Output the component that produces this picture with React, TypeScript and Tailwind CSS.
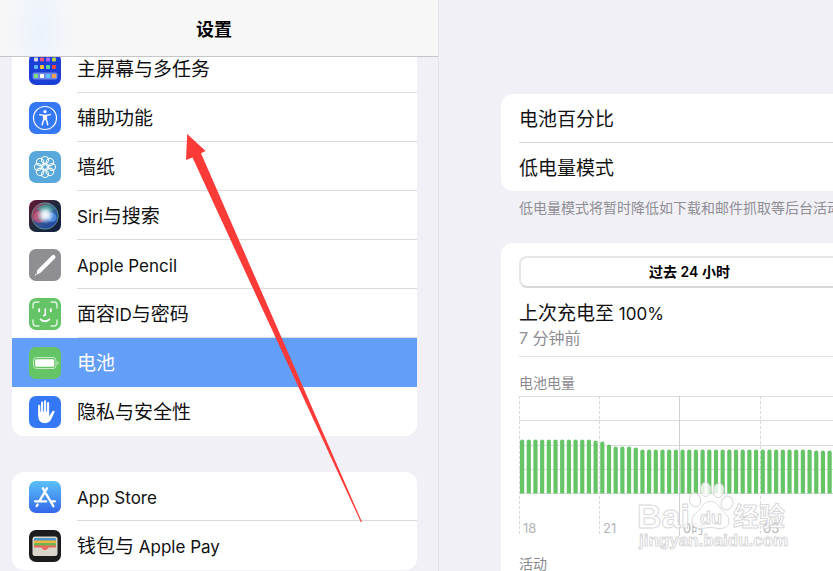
import React from "react";

type Item = {
    label: string;
    icon: React.ReactNode;
    active?: boolean;
};

const HomeScreenIcon: React.FC = () => (
    <svg viewBox="0 0 32 32" className="size-8" aria-hidden="true">
        <rect width="32" height="32" rx="7" fill="#1b3fd6" />
        <rect x="3.5" y="19.5" width="25" height="7" rx="2" fill="#6f86e6" />
        {[
            ["#d9d9de", "#f2557a", "#b06af5", "#b5d64a"],
            ["#5ab4f5", "#f7c33c", "#5ed6a0", "#f04a3c"],
            ["#7ee07c", "#ffffff", "#5ac8fa", "#f5a04a"],
        ].map((row, r) =>
            row.map((fill, c) => (
                <rect key={`${r}-${c}`} x={5 + c * 6} y={[4.5, 12, 21][r]} width="4" height="4" rx="1" fill={fill} />
            ))
        )}
    </svg>
);

const AccessibilityIcon: React.FC = () => (
    <svg viewBox="0 0 32 32" className="size-8" aria-hidden="true">
        <rect width="32" height="32" rx="7" fill="#3478f6" />
        <circle cx="16" cy="16" r="11.5" fill="none" stroke="#fff" strokeWidth="1.2" />
        <circle cx="16" cy="9.6" r="1.6" fill="#fff" />
        <path d="M10.6 12.6 L14.6 13.4 V17.5 L13.2 22.8 M21.4 12.6 L17.4 13.4 V17.5 L18.8 22.8" fill="none" stroke="#fff" strokeWidth="1.4" strokeLinecap="round" strokeLinejoin="round" />
        <path d="M14.2 12.8 H17.8 V18.2 H14.2 Z" fill="#fff" />
    </svg>
);

const WallpaperIcon: React.FC = () => (
    <svg viewBox="0 0 32 32" className="size-8" aria-hidden="true">
        <rect width="32" height="32" rx="7" fill="#58a8dc" />
        <g fill="none" stroke="#fff" strokeWidth="1">
            {[0, 45, 90, 135, 180, 225, 270, 315].map((angle) => (
                <g key={angle} transform={`rotate(${angle} 16 16)`}>
                    <circle cx="16" cy="9" r="3.6" />
                    <path d="M16 13.8 V12.4" />
                </g>
            ))}
            <circle cx="16" cy="16" r="2.4" />
        </g>
    </svg>
);

const SiriIcon: React.FC = () => (
    <svg viewBox="0 0 32 32" className="size-8" aria-hidden="true">
        <defs>
            <linearGradient id="siri-bg" x1="0" y1="0" x2="1" y2="1">
                <stop offset="0" stopColor="#6a1633" />
                <stop offset="0.5" stopColor="#1d2a3c" />
                <stop offset="1" stopColor="#101c3e" />
            </linearGradient>
            <linearGradient id="siri-orb" x1="0" y1="0.3" x2="1" y2="0.7">
                <stop offset="0" stopColor="#d0346a" />
                <stop offset="0.45" stopColor="#5c8fa3" />
                <stop offset="1" stopColor="#1c62cf" />
            </linearGradient>
            <radialGradient id="siri-glow">
                <stop offset="0" stopColor="#fff" />
                <stop offset="0.4" stopColor="#e8f6ff" stopOpacity="0.85" />
                <stop offset="1" stopColor="#bfe6ff" stopOpacity="0" />
            </radialGradient>
        </defs>
        <rect width="32" height="32" rx="7" fill="url(#siri-bg)" />
        <circle cx="16" cy="16" r="13" fill="url(#siri-orb)" opacity="0.75" />
        <path d="M4 21 Q16 15 28 21 A13 13 0 0 1 4 21" fill="#2340a0" opacity="0.6" />
        <circle cx="10.5" cy="17" r="6" fill="#e0607f" opacity="0.6" />
        <circle cx="23" cy="17.5" r="4.6" fill="#5b9bf5" opacity="0.7" />
        <path d="M7 9 Q16 1 25 9 Q18 11 16 16 Q12 10 7 9" fill="#3bb591" opacity="0.5" />
        <circle cx="16.5" cy="15" r="9" fill="url(#siri-glow)" />
        <circle cx="16" cy="16" r="13.3" fill="none" stroke="#7cb8a4" strokeWidth="0.8" opacity="0.8" />
    </svg>
);

const PencilIcon: React.FC = () => (
    <svg viewBox="0 0 32 32" className="size-8" aria-hidden="true">
        <rect width="32" height="32" rx="7" fill="#8e8e93" />
        <path d="M24.4 8.1 L10.6 21.8" stroke="#fff" strokeWidth="4.2" strokeLinecap="round" />
        <path d="M8.4 20.8 L11.6 24 L7.6 25.6 Z" fill="#fff" />
        <path d="M6.9 25.1 L7.4 25.6 L6.2 26.2 Z" fill="#fff" stroke="#fff" strokeWidth="0.6" />
    </svg>
);

const FaceIdIcon: React.FC = () => (
    <svg viewBox="0 0 32 32" className="size-8" aria-hidden="true">
        <rect width="32" height="32" rx="7" fill="#65c466" />
        <g fill="none" stroke="#fff" strokeLinecap="round">
            <path d="M4 10 V7 Q4 4 7 4 H10 M22 4 H25 Q28 4 28 7 V10 M28 22 V25 Q28 28 25 28 H22 M10 28 H7 Q4 28 4 25 V22" strokeWidth="1.4" opacity="0.8" />
            <path d="M10.2 11.2 V13.2 M21.8 11.2 V13.2" strokeWidth="1.9" />
            <path d="M16.3 11 V16.4 Q16.3 17.6 14.7 17.6" strokeWidth="1.6" />
            <path d="M11.6 21.3 Q16 25.3 20.4 21.3" strokeWidth="1.8" />
        </g>
    </svg>
);

const BatteryIcon: React.FC = () => (
    <svg viewBox="0 0 32 32" className="size-8" aria-hidden="true">
        <rect width="32" height="32" rx="7" fill="#65c466" />
        <rect x="4.5" y="10.5" width="22.5" height="11" rx="3" fill="none" stroke="#c9ecc9" strokeWidth="1" />
        <rect x="6.2" y="12.2" width="19" height="7.6" rx="1.3" fill="#fff" />
        <path d="M28.3 14.3 Q29.6 15 29.6 16 Q29.6 17 28.3 17.7 Z" fill="#c9ecc9" />
    </svg>
);

const PrivacyIcon: React.FC = () => (
    <svg viewBox="0 0 32 32" className="size-8" aria-hidden="true">
        <rect width="32" height="32" rx="7" fill="#3478f6" />
        <g stroke="#fff" strokeWidth="2.1" strokeLinecap="round" fill="none">
            <path d="M10.2 9.8 V19" />
            <path d="M13.1 6.6 V17" />
            <path d="M16.1 5.4 V17" />
            <path d="M19.1 7 V18" />
        </g>
        <path d="M9.2 15.5 H20.1 V19.8 Q21.8 18.2 22.6 16.4 Q23.4 14.4 25.3 15 Q26 15.3 25.4 16.6 L22.6 22.6 Q20.6 27.2 15.8 27.2 Q9.2 27.2 9.2 19.5 Z" fill="#fff" />
    </svg>
);

const AppStoreIcon: React.FC = () => (
    <svg viewBox="0 0 32 32" className="size-8" aria-hidden="true">
        <defs>
            <linearGradient id="store-bg" x1="0" y1="0" x2="0" y2="1">
                <stop offset="0" stopColor="#5bc1f8" />
                <stop offset="1" stopColor="#3467ec" />
            </linearGradient>
        </defs>
        <rect width="32" height="32" rx="7" fill="url(#store-bg)" />
        <g stroke="#fff" strokeWidth="2.3" strokeLinecap="round" fill="none">
            <path d="M17.9 7.3 L10.6 19.8" />
            <path d="M13.9 7.3 L15.5 10" />
            <path d="M16.9 12.6 L24.4 25.2" />
            <path d="M6.1 20.3 H17.2" />
            <path d="M21.8 20.3 H25.9" />
            <path d="M8.6 23.5 L7.7 25" />
        </g>
    </svg>
);

const WalletIcon: React.FC = () => (
    <svg viewBox="0 0 32 32" className="size-8" aria-hidden="true">
        <rect width="32" height="32" rx="7" fill="#1c1c1e" />
        <rect x="3.5" y="6.5" width="25" height="19.5" rx="2.5" fill="#d9d6cc" />
        <rect x="5" y="8" width="22" height="5" rx="1" fill="#4f97cf" />
        <rect x="5" y="10.6" width="22" height="4" rx="1" fill="#f0b53f" />
        <rect x="5" y="13.1" width="22" height="4" rx="1" fill="#6fb552" />
        <path d="M5 15.6 H27 V17.4 H20.6 Q19.4 17.4 18.7 18.6 Q17.8 20.3 16 20.3 Q14.2 20.3 13.3 18.6 Q12.6 17.4 11.4 17.4 H5 Z" fill="#e9695c" />
    </svg>
);

const GROUPS: Item[][] = [
    [
        { label: "主屏幕与多任务", icon: <HomeScreenIcon /> },
        { label: "辅助功能", icon: <AccessibilityIcon /> },
        { label: "墙纸", icon: <WallpaperIcon /> },
        { label: "Siri与搜索", icon: <SiriIcon /> },
        { label: "Apple Pencil", icon: <PencilIcon /> },
        { label: "面容ID与密码", icon: <FaceIdIcon /> },
        { label: "电池", icon: <BatteryIcon />, active: true },
        { label: "隐私与安全性", icon: <PrivacyIcon /> },
    ],
    [
        { label: "App Store", icon: <AppStoreIcon /> },
        { label: "钱包与 Apple Pay", icon: <WalletIcon /> },
    ],
];

// Latin runs are set a little smaller than the Chinese around them
const Label: React.FC<{ text: string }> = ({ text }) => (
    <span className="whitespace-pre text-[19px] leading-7">
        {text.split(/([ -~]+)/).map((part, i) =>
            i % 2 ? <span key={i} className="text-[17px]">{part}</span> : part
        )}
    </span>
);

const SettingsRow: React.FC<{ item: Item }> = ({ item }) => (
    <li className="group">
        <a
            href="#"
            aria-current={item.active ? "page" : undefined}
            className={item.active ? "flex h-[49px] items-center gap-4 bg-[#639ef8] pl-[17px] text-white" : "flex h-[49px] items-center gap-4 pl-[17px] text-[#111111]"}
        >
            {item.icon}
            <span className={item.active ? "flex flex-1 self-stretch items-center pt-[3px]" : "flex flex-1 self-stretch items-center border-b border-[#dcdcde] pt-[3px] group-last:border-transparent"}>
                <Label text={item.label} />
            </span>
        </a>
    </li>
);

const Sidebar: React.FC = () => (
    <aside className="w-[439px] shrink-0 overflow-hidden border-r border-[#e3e3e8]">
        <header className="relative z-10 flex h-[57px] items-center justify-center border-b border-[#c6c6c9] bg-[#f7f7f8] bg-[radial-gradient(ellipse_36px_80px_at_40px_32px,#ebf2fd_0,#f7f7f8_100%)] pl-3 pr-[22px] pt-[3px]">
            <h1 className="text-lg font-semibold text-black">设置</h1>
        </header>
        <nav className="-mt-[13px] flex flex-col gap-9 pl-3 pr-[21px]">
            {GROUPS.map((group, i) => (
                <ul key={i} className="overflow-hidden rounded-xl bg-white">
                    {group.map((item) => (
                        <SettingsRow key={item.label} item={item} />
                    ))}
                </ul>
            ))}
        </nav>
    </aside>
);

const PITCH = 6.685;

// battery level per 15 minutes, in chart pixels
const LEVELS = [
    ...Array(11).fill(54),
    53, 52, 49, 47, 47, 47, 46,
    ...Array(26).fill(44),
    ...Array(12).fill(43),
];

const HOURS = ["18", "21", "0时", "03", "06"];

const BatteryChart: React.FC = () => (
    <div className="w-[402px]">
        <svg width="402" height="141" viewBox="0 0 402 141" className="block" role="img" aria-label="电池电量">
            {[0, 24, 49, 73, 97].map((y) => (
                <path key={y} d={`M0 ${y + 0.5} H402`} stroke="#dcdcde" />
            ))}
            {HOURS.map((hour, i) => (
                <path
                    key={hour}
                    d={`M${Math.round(i * 80.2) + 0.5} 0 V140`}
                    stroke={hour === "0时" ? "#d0d0d3" : "#dadadd"}
                    strokeDasharray={hour === "0时" ? undefined : "3 2"}
                />
            ))}
            {LEVELS.map((h, i) => (
                <path
                    key={i}
                    d={`M${1 + i * PITCH} 97.5 v${-(h - 2)} q0 -2 2.1 -2 q2.1 0 2.1 2 v${h - 2} z`}
                    fill="#65c466"
                />
            ))}
        </svg>
        <div className="-mt-[19px] flex text-[13px] leading-5 text-[#b4b4b8]">
            {HOURS.map((hour) => (
                <span key={hour} className="w-20 shrink-0 pl-1">{hour}</span>
            ))}
        </div>
    </div>
);

const BatteryPane: React.FC = () => (
    <main className="min-w-0 flex-1 overflow-hidden pl-[62px] pt-[94px]">
        <ul className="rounded-l-xl bg-white pl-[18px] text-[#111111]">
            <li className="flex h-[49px] items-center border-b border-[#d6d6d9] pt-[3px]"><Label text="电池百分比" /></li>
            <li className="flex h-12 items-center pt-[3px]"><Label text="低电量模式" /></li>
        </ul>
        <p className="mt-[7px] whitespace-nowrap pl-[18px] text-sm leading-5 text-[#8e8e93]">
            低电量模式将暂时降低如下载和邮件抓取等后台活动
        </p>
        <section className="mt-[25px] rounded-l-xl bg-white pb-10 pl-[18px] pt-[13px]">
            <button className="flex h-8 w-[341px] items-center justify-center rounded-lg border-2 border-[#e6e6e8] border-b-[#d8d8da] bg-white text-sm font-semibold text-black">
                过去 24 小时
            </button>
            <h2 className="mt-3 text-[#111111]"><Label text="上次充电至 100%" /></h2>
            <p className="border-b border-[#e2e2e4] pb-2 text-base leading-5 text-[#8e8e93]">7 分钟前</p>
            <h3 className="mb-[3px] mt-4 text-sm leading-5 text-[#8a8a8e]">电池电量</h3>
            <BatteryChart />
            <h3 className="mt-4 text-sm leading-5 text-[#8a8a8e]">活动</h3>
        </section>
    </main>
);

const Watermark: React.FC = () => (
    <svg viewBox="0 0 160 74" className="pointer-events-none absolute left-[634px] top-[480px] w-40" aria-hidden="true">
        <g fill="#fff" fillOpacity="0.8" stroke="#d8d8da" strokeWidth="1" strokeLinejoin="round">
            <text x="3" y="48" className="font-['Liberation_Sans'] text-[34px] font-bold">Bai</text>
            <ellipse cx="61" cy="20" rx="5.5" ry="7" transform="rotate(-12 61 20)" />
            <ellipse cx="71.5" cy="9.5" rx="5.2" ry="7" />
            <ellipse cx="84.5" cy="10.5" rx="5.2" ry="7" transform="rotate(10 84.5 10.5)" />
            <ellipse cx="93" cy="23" rx="5.8" ry="7" transform="rotate(20 93 23)" />
            <path d="M76.500 21.500 C82 21.500 84 25 87 29 C90 33 95 35 95 41 C95 46 91 48.500 86 48.500 C82 48.500 80 47.500 76.500 47.500 C73 47.500 70 48.500 66 48.500 C61 48.500 58 45 58 41 C58 35 63 33 66 29 C69 25 71 21.500 76.500 21.500 Z" />
            <text x="66" y="44" className="font-['Liberation_Sans'] text-lg font-bold">du</text>
            <text x="99" y="46" className="font-['Noto_Sans_CJK_SC'] text-[26px] font-bold">经验</text>
            <text x="5" y="66" className="font-['Liberation_Sans'] text-[17px] font-bold">jingyan.baidu.com</text>
        </g>
    </svg>
);

const PointerArrow: React.FC = () => (
    <svg width="178" height="390" viewBox="0 0 178 390" className="pointer-events-none absolute left-[185px] top-[133px] z-20" aria-hidden="true">
        <path d="M2.200 1 L20.600 18 L16 20.200 L177 389 L175.800 389 L7.500 24.500 L1 27 Z" fill="#fc3a38" />
    </svg>
);

export default function App() {
    return (
        <div className="relative flex h-screen overflow-hidden bg-[#f1f0f6] font-['Inter','Noto_Sans_CJK_SC',sans-serif]">
            <Sidebar />
            <BatteryPane />
            <Watermark />
            <PointerArrow />
        </div>
    );
}
